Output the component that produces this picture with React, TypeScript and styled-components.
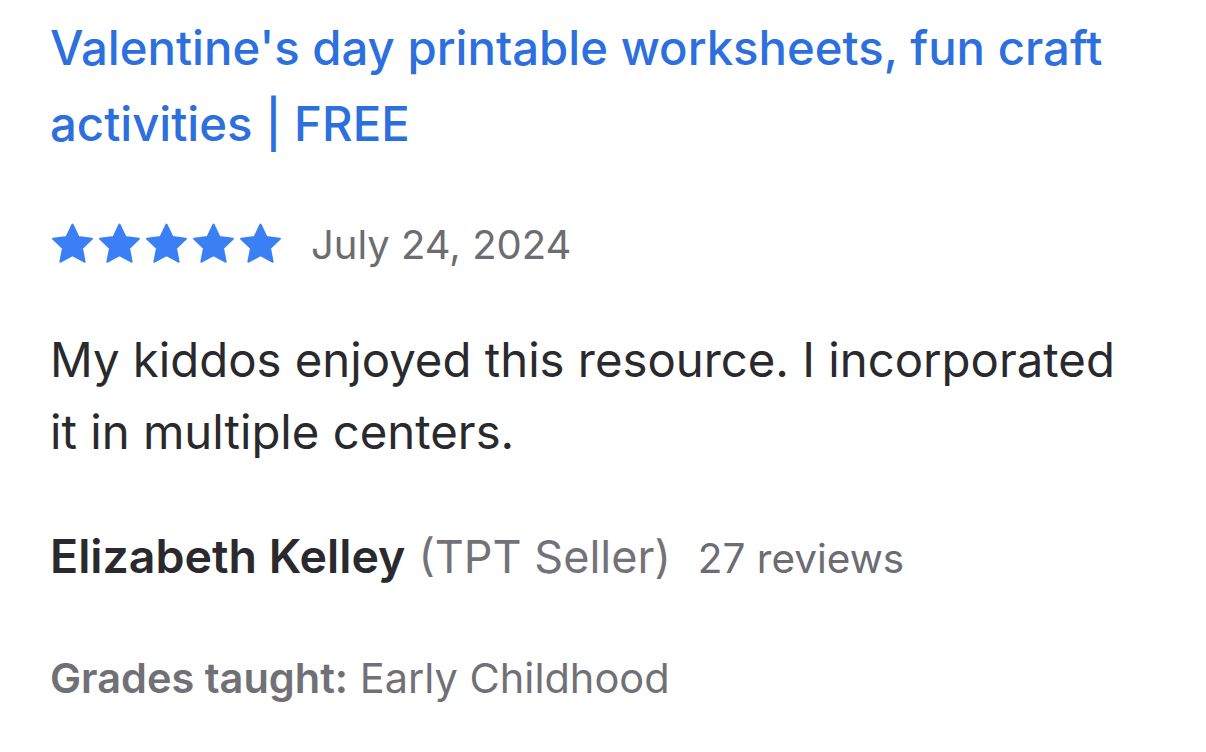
import React from "react";
import styled, { createGlobalStyle } from "styled-components";

const Global = createGlobalStyle`
  html, body { margin: 0; padding: 0; background: #ffffff; }
  body { font-family: Inter, "Liberation Sans", Arial, sans-serif; -webkit-font-smoothing: antialiased; }
`;

const Card = styled.article`
  width: 1206px;
  height: 752px;
  box-sizing: border-box;
  padding: 10px 50px 0 50px;
  display: flex;
  flex-direction: column;
  background: #fff;
`;

const Title = styled.a`
  display: block;
  color: #2d6fdc;
  font-size: 47.3px;
  font-weight: 500;
  line-height: 76px;
  text-decoration: none;
`;

const RatingRow = styled.div`
  display: flex;
  align-items: center;
  gap: 28px;
  margin-top: 60px;
  height: 44px;
`;

const Stars = styled.div`
  display: flex;
  gap: 2px;
`;

const Date = styled.span`
  font-size: 40px;
  color: #6c6c72;
  font-weight: 400;
`;

const Body = styled.p`
  margin: 58px 0 0 0;
  max-width: 1075px;
  font-size: 47.3px;
  line-height: 72px;
  color: #2a2a2e;
  font-weight: 400;
`;

const Author = styled.div`
  display: flex;
  align-items: baseline;
  margin-top: 58px;
  font-size: 46.5px;
  line-height: 60px;
`;

const Name = styled.span`
  font-weight: 600;
  color: #2a2a2e;
`;

const Role = styled.span`
  color: #727278;
  font-size: 45px;
  margin-left: 13px;
`;

const Count = styled.span`
  color: #6c6c72;
  font-size: 40.5px;
  margin-left: 27px;
`;

const Grades = styled.div`
  margin-top: 64px;
  font-size: 41.5px;
  color: #707076;
  line-height: 50px;
`;

const Label = styled.span`
  font-weight: 600;
`;

const Star = () => (
  <svg width="45" height="44" viewBox="0 0 24 23" aria-hidden>
    <path
      d="M12 1.2l3.1 6.6 7.2.9-5.3 5 1.4 7.2L12 17.4l-6.4 3.5L7 13.7l-5.3-5 7.2-.9z"
      fill="#3a80f4"
      stroke="#3a80f4"
      strokeWidth="1.2"
      strokeLinejoin="round"
    />
  </svg>
);

export default function App() {
  return (
    <>
      <Global />
      <Card>
        <Title href="#">
          Valentine's day printable worksheets, fun craft activities | FREE
        </Title>
        <RatingRow>
          <Stars>
            {Array.from({ length: 5 }).map((_, i) => (
              <Star key={i} />
            ))}
          </Stars>
          <Date>July 24, 2024</Date>
        </RatingRow>
        <Body>
          My kiddos enjoyed this resource. I incorporated it in multiple centers.
        </Body>
        <Author>
          <Name>Elizabeth Kelley</Name>
          <Role>(TPT Seller)</Role>
          <Count>27 reviews</Count>
        </Author>
        <Grades>
          <Label>Grades taught:</Label> Early Childhood
        </Grades>
      </Card>
    </>
  );
}
